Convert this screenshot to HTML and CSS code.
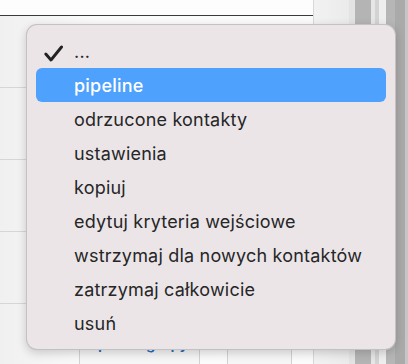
FILE: index.html
```html
<!DOCTYPE html>
<html lang="pl">
<head>
<meta charset="utf-8">
<link rel="stylesheet" href="styles.css">
</head>
<body>
<div class="page">
  <div class="main">
    <div class="topbar"></div>
    <div class="row"></div>
    <div class="row"></div>
    <div class="row"></div>
    <div class="row"></div>
    <div class="row last">
      <div class="btn btn-wide"><span class="btn-text">pokaż grupy</span></div>
      <div class="btn btn-small"></div>
    </div>
  </div>
  <div class="strip">
    <div class="band b1"></div>
    <div class="band b2"></div>
    <div class="band b3"></div>
    <div class="band b4"></div>
    <div class="band b5"></div>
    <div class="band b6"></div>
    <div class="band b7"></div>
    <div class="band b8"></div>
    <div class="band b9"></div>
  </div>
</div>

<div class="menu">
  <div class="item checked">
    <svg class="check" width="20" height="17" viewBox="0 0 20 17"><path d="M1.8 9 L7 15 L17.5 2" fill="none" stroke="#222" stroke-width="2.9" stroke-linecap="round" stroke-linejoin="round"/></svg>
    <span class="label">...</span>
  </div>
  <div class="item active"><span class="label">pipeline</span></div>
  <div class="item"><span class="label">odrzucone kontakty</span></div>
  <div class="item"><span class="label">ustawienia</span></div>
  <div class="item"><span class="label">kopiuj</span></div>
  <div class="item"><span class="label">edytuj kryteria wejściowe</span></div>
  <div class="item"><span class="label">wstrzymaj dla nowych kontaktów</span></div>
  <div class="item"><span class="label">zatrzymaj całkowicie</span></div>
  <div class="item"><span class="label">usuń</span></div>
</div>
</body>
</html>
```
FILE: styles.css
```css
html, body {
  margin: 0;
  padding: 0;
  width: 408px;
  height: 364px;
  overflow: hidden;
  font-family: Inter, "Noto Sans", "Liberation Sans", sans-serif;
}

.page {
  display: grid;
  grid-template-columns: 313px 95px;
  height: 364px;
  background: #f4f4f4;
}

.main {
  display: flex;
  flex-direction: column;
  background: linear-gradient(90deg, #f0f0f0 0%, #fafafa 30%, #fbfbfb 100%);
}

.topbar {
  height: 15px;
  background: #fdfdfd;
  border-bottom: 1px solid #3a3a3a;
  flex: none;
}

.row {
  height: 71px;
  border-bottom: 1px solid #d6d6d6;
  flex: none;
}

.row.last {
  border-bottom: none;
  flex: 1;
  display: flex;
  align-items: flex-end;
  gap: 27px;
  padding-left: 79px;
}

.btn {
  height: 40px;
  margin-bottom: -13px;
  border: 1px solid #d2d2d2;
  border-radius: 6px;
  background: #f6f6f6;
  box-sizing: border-box;
  display: flex;
  justify-content: flex-start;
  align-items: flex-start;
}

.btn-wide { width: 121px; padding-left: 18px; }
.btn-small { width: 65px; }

.btn-text {
  color: #1f6fc0;
  font-size: 15px;
  font-weight: 600;
  margin-top: -3px;
  line-height: 18px;
}

.strip {
  display: flex;
  border-left: 1px solid #d8d8d8;
}

.band { height: 100%; flex: none; }
.b1 { width: 35px; background: linear-gradient(90deg, #f2f2f2, #ebebeb); }
.b2 { width: 6px; background: #e3e3e3; }
.b3 { width: 16px; background: #b4b4b4; }
.b4 { width: 4px; background: #e6e6e6; }
.b5 { width: 4px; background: #d3d3d3; }
.b6 { width: 7px; background: #eeeeee; }
.b7 { width: 9px; background: #b6b6b6; }
.b8 { width: 10px; background: #aaaaaa; }
.b9 { width: 3px; background: #c6c6c6; }

.menu {
  position: absolute;
  left: 26px;
  top: 24px;
  width: 370px;
  height: 326px;
  box-sizing: border-box;
  padding: 9px 9px;
  background: #ebe5e8;
  border: 1px solid rgba(0, 0, 0, 0.16);
  border-radius: 11px;
  box-shadow: 0 3px 10px rgba(0, 0, 0, 0.18);
  display: flex;
  flex-direction: column;
}

.item {
  height: 34px;
  flex: none;
  display: flex;
  align-items: center;
  position: relative;
  padding-left: 38px;
  border-radius: 6px;
  font-size: 18px;
  color: #262626;
  letter-spacing: 0.2px;
}

.item.active {
  background: #4ea1fd;
  color: #ffffff;
  font-weight: 500;
}

.check {
  position: absolute;
  left: 8px;
  top: 11px;
}
```
